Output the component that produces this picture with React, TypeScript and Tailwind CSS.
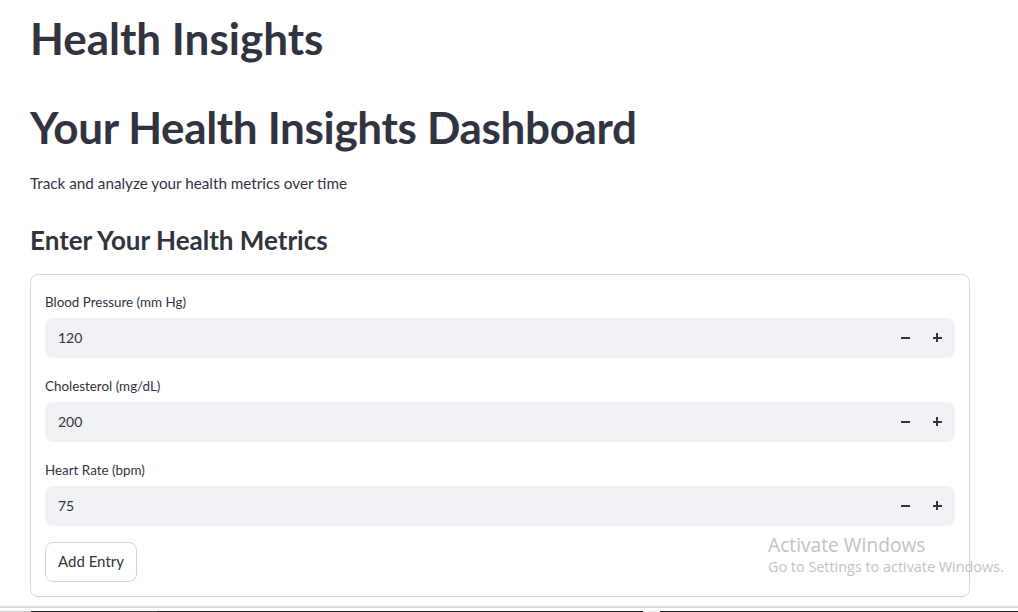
import { FC } from "react";

interface MetricInputProps {
  label: string;
  value: number;
}

const MetricInput: FC<MetricInputProps> = ({ label, value }) => {
  return (
    <div className="flex flex-col">
      <label className="text-[13.4px] leading-[16px] h-[26px] pt-[2px] text-[#31333f]">
        {label}
      </label>
      <div className="flex items-center h-[40px] rounded-lg bg-[#f0f2f6]">
        <input
          readOnly
          value={value}
          className="flex-1 bg-transparent pl-[13px] text-[14px] text-[#31333f] outline-none"
        />
        {/* step buttons */}
        <button className="w-[32px] h-full flex items-center justify-center">
          <span className="block w-[9px] h-[2px] bg-[#31333f]" />
        </button>
        <button className="w-[32px] h-full flex items-center justify-center mr-[2px]">
          <span className="relative block w-[9px] h-[9px]">
            <span className="absolute left-0 top-[3.5px] w-[9px] h-[2px] bg-[#31333f]" />
            <span className="absolute top-0 left-[3.5px] w-[2px] h-[9px] bg-[#31333f]" />
          </span>
        </button>
      </div>
    </div>
  );
};

const metrics = [
  { label: "Blood Pressure (mm Hg)", value: 120 },
  { label: "Cholesterol (mg/dL)", value: 200 },
  { label: "Heart Rate (bpm)", value: 75 },
];

const App: FC = () => {
  return (
    <div
      className="relative w-[1018px] h-[612px] overflow-hidden bg-white text-[#31333f]"
      style={{ fontFamily: "Lato, 'Noto Sans', sans-serif" }}
    >
      <div className="pl-[30px] w-[970px]">
        <h1 className="pt-[12px] text-[44px] leading-[1.2] font-bold">
          Health Insights
        </h1>
        <h1 className="mt-[36px] text-[44px] leading-[1.2] font-bold tracking-[-0.33px]">
          Your Health Insights Dashboard
        </h1>
        <p className="mt-[19px] text-[15.25px] leading-[20px]">
          Track and analyze your health metrics over time
        </p>
        <h3 className="mt-[32px] text-[26px] leading-[30px] font-bold">
          Enter Your Health Metrics
        </h3>

        <div className="mt-[19px] border border-[#d6d6d9] rounded-lg px-[14px] pt-[17px] pb-[15px] h-[323px]">
          <div className="flex flex-col gap-[18px]">
            {metrics.map((m) => (
              <MetricInput key={m.label} label={m.label} value={m.value} />
            ))}
          </div>
          <button className="mt-[16px] h-[40px] w-[92px] rounded-lg border border-[#d6d6d9] bg-white text-[15px] text-[#31333f]">
            Add Entry
          </button>
        </div>
      </div>

      {/* taskbar peeking in at the bottom */}
      <div className="mt-[9px] h-[2px] bg-[#dedede]" />
      <div className="mt-[3px] flex h-[1px]">
        <div className="w-[31px] bg-[#d4d4d4]" />
        <div className="w-[89px] bg-[#1f2628]" />
        <div className="w-[37px] bg-[#3a4242]" />
        <div className="w-[486px] bg-[#1f2628]" />
        <div className="w-[17px] bg-[#e8e8e8]" />
        <div className="flex-1 bg-[#1f2628]" />
      </div>

      {/* Windows activation watermark */}
      <div
        className="absolute left-[768px] top-[532px] text-[#c3c3c3] pointer-events-none"
        style={{ fontFamily: "'Open Sans', sans-serif" }}
      >
        <div className="text-[19.2px] leading-[25px]">Activate Windows</div>
        <div className="text-[14.4px] leading-[18px] mt-[1px]">
          Go to Settings to activate Windows.
        </div>
      </div>
    </div>
  );
};

export default App;
